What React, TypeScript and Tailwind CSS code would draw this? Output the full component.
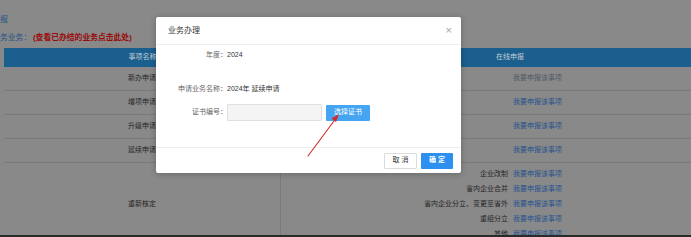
import React from "react";

const rows = ["新办申请", "增项申请", "升级申请", "延续申请"];
const subs = ["企业改制", "省内企业合并", "省内企业分立、变更至省外", "重组分立", "其他"];

export default function App() {
  return (
    <div
      className="relative w-[691px] h-[237px] overflow-hidden bg-[#898989]"
      style={{ fontFamily: '"Liberation Sans", "Noto Sans CJK SC", sans-serif' }}
    >
      <div className="h-[235px] overflow-hidden">
        <div className="h-[14px]" />
        <div className="h-[12px] text-[8px] leading-[12px] text-[#1f5485]">报</div>
        <div className="h-[22px] flex items-center text-[7.8px] pt-[1px]">
          <span className="text-[#1f5485] w-[33px]">务业务：</span>
          <span className="text-[#9a0a0a] font-bold">(查看已办结的业务点击此处)</span>
        </div>
        <div className="ml-[3px] w-[740px] border-l border-[#7d8a94]">
          <div className="flex h-[19px] bg-[#1b5f8e] text-[7px] text-[#c2ccd4] items-center">
            <div className="w-[277px] text-center">事项名称</div>
            <div className="flex-1 pl-[215px]">在线申报</div>
          </div>
          {rows.map((r, i) => (
            <div key={r} className="flex h-[24px] border-b border-[#7a7a7a] text-[7px] items-center">
              <div className="w-[277px] h-full flex items-center justify-center border-r border-[#7a7a7a] text-[#262626]">{r}</div>
              <div className="flex-1 flex items-center">
                <div className="w-[232px]" />
                <span className={i === 0 ? "text-[#505a66]" : "text-[#24528f]"}>我要申报该事项</span>
              </div>
            </div>
          ))}
          <div className="flex text-[7px]">
            <div className="w-[277px] flex items-center justify-center border-r border-[#7a7a7a] text-[#262626]">重新核定</div>
            <div className="flex-1 flex flex-col pt-[4px] pb-[4px]">
              {subs.map((s) => (
                <div key={s} className="flex h-[15px] items-center">
                  <div className="w-[227px] text-right text-[#262626]">{s}</div>
                  <span className="ml-[5px] text-[#24528f]">我要申报该事项</span>
                </div>
              ))}
            </div>
          </div>
        </div>
      </div>
      <div className="h-[2px] bg-[#2a2a2a]" />

      {/* Modal */}
      <div className="absolute left-[156px] top-[17px] w-[305px] h-[156px] bg-white rounded-[2px] shadow-[0_1px_6px_rgba(0,0,0,0.25)] flex flex-col">
        <div className="h-[28px] flex items-center justify-between px-[12px] border-b border-[#efefef]">
          <span className="text-[8px] text-[#333]">业务办理</span>
          <span className="text-[11px] font-light text-[#a5a5a5] leading-none mr-[-3px]">×</span>
        </div>
        <div className="flex-1 flex flex-col text-[7px]">
          <div className="h-[20px] flex items-center">
            <div className="w-[71px] text-right text-[#666]">年度：</div>
            <div className="text-[#333]">2024</div>
          </div>
          <div className="h-[14px]" />
          <div className="h-[20px] flex items-center">
            <div className="w-[71px] text-right text-[#666]">申请业务名称：</div>
            <div className="text-[#333]">2024年 延续申请</div>
          </div>
          <div className="h-[5px]" />
          <div className="h-[17px] flex items-center">
            <div className="w-[71px] text-right text-[#666]">证书编号：</div>
            <div className="w-[95px] h-[17px] bg-[#f4f4f4] border border-[#e0e0e0] rounded-[1px]" />
            <div className="ml-[4px] w-[44px] h-[16px] bg-[#45a5f2] text-white flex items-center justify-center rounded-[1px]">选择证书</div>
          </div>
        </div>
        <div className="h-[26px] border-t border-[#eeeeee] flex items-center justify-end gap-[4px] pr-[8px] text-[7px]">
          <div className="w-[33px] h-[16px] border border-[#dcdcdc] bg-white text-[#333] flex items-center justify-center rounded-[1px]">取 消</div>
          <div className="w-[32px] h-[16px] bg-[#2d8ff0] text-white font-bold flex items-center justify-center rounded-[1px]">确 定</div>
        </div>
      </div>

      {/* Red arrow */}
      <svg className="absolute left-0 top-0" width="691" height="237" viewBox="0 0 691 237">
        <path d="M308 156 L334 121" stroke="#d42a2a" strokeWidth="1.1" strokeLinecap="round" fill="none" />
        <path d="M339 114 L331.5 118.5 L336 122 Z" fill="#d42a2a" />
      </svg>
    </div>
  );
}
